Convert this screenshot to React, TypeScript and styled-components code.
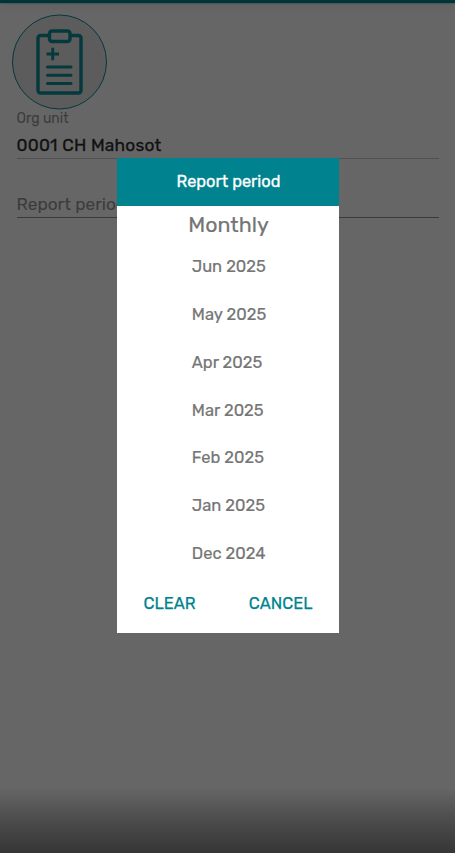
import React from "react";
import styled, { createGlobalStyle } from "styled-components";

const GlobalStyle = createGlobalStyle`
  * { box-sizing: border-box; }
  body { margin: 0; background: #666; font-family: Rubik, Roboto, "Liberation Sans", sans-serif; }
`;

const Screen = styled.div`
  position: relative;
  height: 853px;
  overflow: hidden;
  display: flex;
  flex-direction: column;
  background: linear-gradient(#666 0, #666 788px, #4c4c4c 820px, #363636 853px);
`;

const StatusStrip = styled.div`
  height: 3px;
  flex: none;
  background: #043334;
  box-shadow: 0 1px 1px #3f5c5e, 0 2px 8px rgba(0, 0, 0, 0.13);
`;

const Form = styled.main`
  display: flex;
  flex-direction: column;
  padding: 11px 16px 0 12px;
`;

const Emblem = styled.svg`
  display: block;
  width: 95px;
  height: 96px;
`;

const Field = styled.div<{ $height: number; $line: string }>`
  height: ${(p) => p.$height}px;
  margin-left: 4.5px;
  display: flex;
  flex-direction: column;
  justify-content: space-between;
  padding-top: 1px;
  border-bottom: 1px solid ${(p) => p.$line};
`;

const Text = styled.span<{ $size: number; $line: number; $color: string; $stroke?: number; $track?: number }>`
  display: block;
  white-space: nowrap;
  font-size: ${(p) => p.$size}px;
  line-height: ${(p) => p.$line}px;
  color: ${(p) => p.$color};
  font-weight: 400;
  -webkit-text-stroke: ${(p) => p.$stroke ?? 0}px ${(p) => p.$color};
  letter-spacing: ${(p) => p.$track ?? 0}px;
`;

const Overlay = styled.div`
  position: absolute;
  inset: 0;
  display: flex;
  justify-content: center;
  align-items: flex-start;
  padding-top: 158px;
`;

const Dialog = styled.section`
  width: 222px;
  height: 475px;
  background: #fff;
  display: flex;
  flex-direction: column;
`;

const DialogHeader = styled.header`
  height: 48px;
  flex: none;
  display: flex;
  justify-content: center;
  align-items: center;
  padding-left: 2px;
  background: #00838f;
`;

const PeriodType = styled.div`
  display: flex;
  justify-content: center;
  height: 37.6px;
  flex: none;
  padding: 5px 0 0 2px;
`;

const PeriodList = styled.ul`
  list-style: none;
  margin: 0;
  padding: 0 0 0 75.3px;
`;

const PeriodItem = styled.li`
  height: 47.75px;
  display: flex;
  align-items: center;
`;

const Actions = styled.footer`
  display: flex;
  justify-content: space-between;
  padding: 16.4px 26px 0 27px;
`;

const ActionButton = styled.button`
  border: 0;
  padding: 0;
  background: none;
  font-family: inherit;
`;

const periods = ["Jun 2025", "May 2025", "Apr 2025", "Mar 2025", "Feb 2025", "Jan 2025", "Dec 2024"];

export default function App() {
  return (
    <>
      <GlobalStyle />
      <Screen>
        <StatusStrip />
        <Form>
          <Emblem viewBox="0 0 95 96" fill="none" stroke="#04393d">
            <circle cx="47.5" cy="48" r="47" fill="#5c5c5c" strokeWidth="1" />
            <path d="M37 21.5H28.5a2.5 2.5 0 0 0-2.5 2.5v52.5a2.5 2.5 0 0 0 2.5 2.5h38a2.5 2.5 0 0 0 2.5-2.5V24a2.5 2.5 0 0 0-2.5-2.5H58" strokeWidth="3.4" />
            <rect x="37.5" y="17" width="20.5" height="10.5" rx="2.5" strokeWidth="3.4" />
            <path d="M34.5 40h12.5M40.75 33.8v12.4" strokeWidth="2.8" />
            <path d="M35.5 53h23.5M35.5 61.2h23.5M35.5 69.4h23.5" strokeWidth="3" strokeLinecap="round" />
          </Emblem>
          <Field $height={49} $line="#505050">
            <Text $size={14} $line={16} $color="#3b3b3b">Org unit</Text>
            <Text $size={17.3} $line={26} $color="#111" $stroke={0.3} $track={0.22}>0001 CH Mahosot</Text>
          </Field>
          <Field $height={59} $line="#3a3a3a">
            <span />
            <Text $size={17.3} $line={26} $color="#3b3b3b">Report period</Text>
          </Field>
        </Form>
        <Overlay>
          <Dialog role="dialog">
            <DialogHeader>
              <Text $size={16.4} $line={20} $color="#fff" $stroke={0.3}>Report period</Text>
            </DialogHeader>
            <PeriodType>
              <Text $size={21.4} $line={28} $color="#757575" $stroke={0.2}>Monthly</Text>
            </PeriodType>
            <PeriodList>
              {periods.map((label) => (
                <PeriodItem key={label}>
                  <Text $size={16.5} $line={20} $color="#757575" $stroke={0.2}>{label}</Text>
                </PeriodItem>
              ))}
            </PeriodList>
            <Actions>
              <ActionButton>
                <Text $size={16.5} $line={20} $color="#00838f" $stroke={0.25}>CLEAR</Text>
              </ActionButton>
              <ActionButton>
                <Text $size={16.5} $line={20} $color="#00838f" $stroke={0.25}>CANCEL</Text>
              </ActionButton>
            </Actions>
          </Dialog>
        </Overlay>
      </Screen>
    </>
  );
}
